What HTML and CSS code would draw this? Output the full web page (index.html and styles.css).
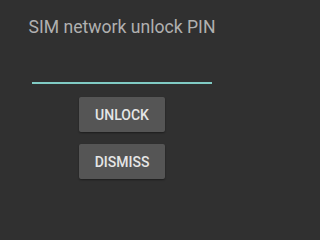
FILE: index.html
```html
<!DOCTYPE html>
<html>
<head>
<meta charset="utf-8">
<link rel="stylesheet" href="styles.css">
</head>
<body>
<div class="screen">
  <div class="title">SIM network unlock PIN</div>
  <div class="field"></div>
  <div class="actions">
    <button class="btn">UNLOCK</button>
    <button class="btn">DISMISS</button>
  </div>
</div>
</body>
</html>
```
FILE: styles.css
```css
html, body {
  margin: 0;
  padding: 0;
  background: #303030;
}
.screen {
  width: 240px;
  height: 210px;
  display: flex;
  flex-direction: column;
  align-items: center;
  padding-left: 4px;
  box-sizing: border-box;
  font-family: Roboto, "Liberation Sans", sans-serif;
}
.title {
  margin-top: 16px;
  font-size: 17.6px;
  line-height: 23px;
  color: #b0b0b0;
  white-space: nowrap;
}
.field {
  margin-top: 43px;
  width: 180px;
  height: 2px;
  background: #80cbc4;
}
.actions {
  margin-top: 13px;
  display: flex;
  flex-direction: column;
  align-items: center;
  gap: 12px;
}
.btn {
  font-family: Roboto, "Liberation Sans", sans-serif;
  font-weight: 500;
  font-size: 14px;
  color: #e6e6e6;
  background: #555555;
  border: none;
  border-radius: 2px;
  height: 35px;
  padding: 0 16px;
  box-shadow: 0 1px 2px rgba(0,0,0,0.4);
}
```
